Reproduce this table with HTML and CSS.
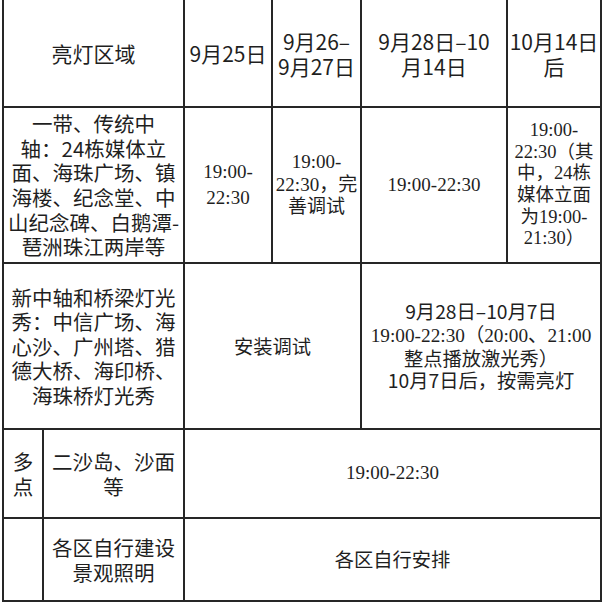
FILE: index.html
```html
<!DOCTYPE html>
<html lang="zh-CN">
<head>
<meta charset="utf-8">
<title>亮灯时间安排</title>
<link rel="stylesheet" href="styles.css">
</head>
<body>
<table class="schedule">
  <colgroup>
    <col class="c0"><col class="c1"><col class="c2"><col class="c3"><col class="c4"><col class="c5">
  </colgroup>
  <tr class="r-head">
    <th colspan="2">亮灯区域</th>
    <th>9月25日</th>
    <th>9月26–<br>9月27日</th>
    <th>9月28日–10<br>月14日</th>
    <th>10月14日<br>后</th>
  </tr>
  <tr class="r1">
    <td colspan="2" class="area">一带、传统中<br>轴：24栋媒体立<br>面、海珠广场、镇<br>海楼、纪念堂、中<br>山纪念碑、白鹅潭-<br>琶洲珠江两岸等</td>
    <td class="serif loose">19:00-<br>22:30</td>
    <td class="serif">19:00-<br>22:30，完<br>善调试</td>
    <td class="serif">19:00-22:30</td>
    <td class="serif small">19:00-<br>22:30（其<br>中，24栋<br>媒体立面<br>为19:00-<br>21:30）</td>
  </tr>
  <tr class="r2">
    <td colspan="2" class="area">新中轴和桥梁灯光<br>秀：中信广场、海<br>心沙、广州塔、猎<br>德大桥、海印桥、<br>海珠桥灯光秀</td>
    <td colspan="2" class="merged">安装调试</td>
    <td colspan="2" class="merged">9月28日–10月7日<br><span class="serif">19:00-22:30（20:00、21:00</span><br>整点播放激光秀）<br>10月7日后，按需亮灯</td>
  </tr>
  <tr class="r3">
    <td class="area">多<br>点</td>
    <td class="area">二沙岛、沙面<br>等</td>
    <td colspan="4" class="serif">19:00-22:30</td>
  </tr>
  <tr class="r4">
    <td></td>
    <td class="area">各区自行建设<br>景观照明</td>
    <td colspan="4" class="merged">各区自行安排</td>
  </tr>
</table>
</body>
</html>
```
FILE: styles.css
```css
html, body {
  margin: 0;
  padding: 0;
  background: #ffffff;
}

.schedule {
  border-collapse: collapse;
  table-layout: fixed;
  width: 600px;
  margin: 0 0 0 2px;
  color: #1f1f1f;
  font-family: "Noto Sans CJK SC", sans-serif;
  border: 2px solid #262626;
  border-top: none;
}

.c0 { width: 40px; }
.c1 { width: 141px; }
.c2 { width: 88px; }
.c3 { width: 89px; }
.c4 { width: 146px; }
.c5 { width: 94px; }

.schedule th,
.schedule td {
  border: 2px solid #262626;
  padding: 0;
  text-align: center;
  vertical-align: middle;
  white-space: nowrap;
  font-size: 19px;
  line-height: 22.5px;
}

.schedule th {
  border-top: none;
  font-weight: normal;
  font-size: 21px;
  line-height: 25px;
  padding-top: 1px;
}

.r-head { height: 107px; }
.r1 { height: 156px; }
.r2 { height: 166px; }
.r3 { height: 89px; }
.r4 { height: 83px; }

.schedule .area {
  font-size: 20.5px;
  line-height: 24.6px;
}

.serif {
  font-family: "Liberation Serif", "Noto Sans CJK SC", serif;
}

.schedule .loose {
  line-height: 26px;
}

.schedule .small {
  font-size: 18.5px;
  line-height: 21.7px;
}

.schedule .merged {
  font-size: 19.3px;
  line-height: 22.4px;
}
```
